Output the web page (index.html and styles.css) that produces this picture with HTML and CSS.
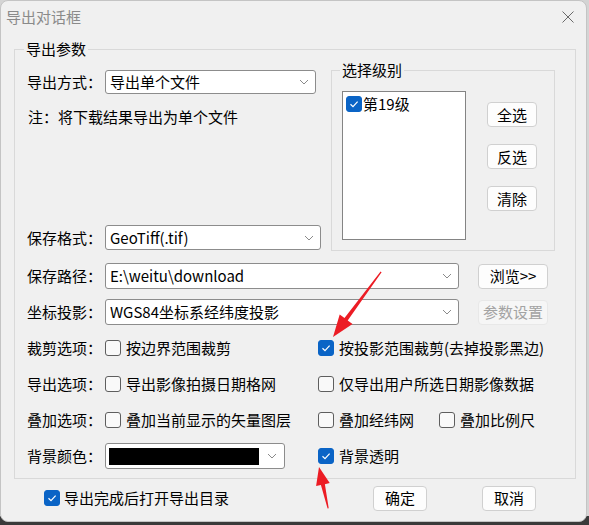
FILE: index.html
```html
<!DOCTYPE html>
<html lang="zh-CN">
<head>
<meta charset="utf-8">
<title>导出对话框</title>
<link rel="stylesheet" href="styles.css">
</head>
<body>
<div class="window">
  <div class="titlebar">
    <span class="title">导出对话框</span>
    <svg class="close" width="12" height="12" viewBox="0 0 12 12"><path d="M0.5 0.5L11.5 11.5M11.5 0.5L0.5 11.5" stroke="#6a6a6a" stroke-width="1" fill="none"/></svg>
  </div>
  <div class="content">
    <fieldset class="group main">
      <legend>导出参数</legend>
      <div class="top">
        <div class="left-col">
          <div class="row h24">
            <span class="lbl">导出方式：</span>
            <div class="combo w211"><span class="val">导出单个文件</span><svg class="chev" width="10" height="6" viewBox="0 0 10 6"><path d="M1 1L5 5L9 1" stroke="#8a8a8a" fill="none"/></svg></div>
          </div>
          <div class="note">注：将下载结果导出为单个文件</div>
          <div class="row h25 push">
            <span class="lbl">保存格式：</span>
            <div class="combo w216"><span class="val">GeoTiff(.tif)</span><svg class="chev" width="10" height="6" viewBox="0 0 10 6"><path d="M1 1L5 5L9 1" stroke="#8a8a8a" fill="none"/></svg></div>
          </div>
        </div>
        <fieldset class="group levels">
          <legend>选择级别</legend>
          <div class="levels-body">
            <div class="listbox">
              <div class="item"><span class="cb on"><svg width="14" height="14" viewBox="0 0 14 14"><path d="M3.5 7.2L6 9.6L10.6 4.6" stroke="#fff" stroke-width="1.2" fill="none"/></svg></span><span>第19级</span></div>
            </div>
            <div class="btn-col">
              <button class="btn">全选</button>
              <button class="btn">反选</button>
              <button class="btn">清除</button>
            </div>
          </div>
        </fieldset>
      </div>
      <div class="rows">
        <div class="row">
          <span class="lbl">保存路径：</span>
          <div class="combo w354"><span class="val">E:\weitu\download</span><svg class="chev" width="10" height="6" viewBox="0 0 10 6"><path d="M1 1L5 5L9 1" stroke="#8a8a8a" fill="none"/></svg></div>
          <button class="btn side">浏览&gt;&gt;</button>
        </div>
        <div class="row">
          <span class="lbl">坐标投影：</span>
          <div class="combo w354"><span class="val">WGS84坐标系经纬度投影</span><svg class="chev" width="10" height="6" viewBox="0 0 10 6"><path d="M1 1L5 5L9 1" stroke="#8a8a8a" fill="none"/></svg></div>
          <button class="btn side disabled">参数设置</button>
        </div>
        <div class="row">
          <span class="lbl">裁剪选项：</span>
          <label class="chk c213"><span class="cb"></span><span>按边界范围裁剪</span></label>
          <label class="chk"><span class="cb on"><svg width="14" height="14" viewBox="0 0 14 14"><path d="M3.5 7.2L6 9.6L10.6 4.6" stroke="#fff" stroke-width="1.2" fill="none"/></svg></span><span>按投影范围裁剪(去掉投影黑边)</span></label>
        </div>
        <div class="row">
          <span class="lbl">导出选项：</span>
          <label class="chk c213"><span class="cb"></span><span>导出影像拍摄日期格网</span></label>
          <label class="chk"><span class="cb"></span><span>仅导出用户所选日期影像数据</span></label>
        </div>
        <div class="row">
          <span class="lbl">叠加选项：</span>
          <label class="chk c213"><span class="cb"></span><span>叠加当前显示的矢量图层</span></label>
          <label class="chk c121"><span class="cb"></span><span>叠加经纬网</span></label>
          <label class="chk"><span class="cb"></span><span>叠加比例尺</span></label>
        </div>
        <div class="row">
          <span class="lbl">背景颜色：</span>
          <div class="combo w180 color"><span class="swatch"></span><svg class="chev" width="10" height="6" viewBox="0 0 10 6"><path d="M1 1L5 5L9 1" stroke="#8a8a8a" fill="none"/></svg></div>
          <label class="chk"><span class="cb on"><svg width="14" height="14" viewBox="0 0 14 14"><path d="M3.5 7.2L6 9.6L10.6 4.6" stroke="#fff" stroke-width="1.2" fill="none"/></svg></span><span>背景透明</span></label>
        </div>
      </div>
    </fieldset>
    <div class="footer">
      <label class="chk foot-chk"><span class="cb on"><svg width="14" height="14" viewBox="0 0 14 14"><path d="M3.5 7.2L6 9.6L10.6 4.6" stroke="#fff" stroke-width="1.2" fill="none"/></svg></span><span>导出完成后打开导出目录</span></label>
      <button class="btn foot-btn">确定</button>
      <button class="btn foot-btn cancel">取消</button>
    </div>
  </div>
  <svg class="arrows" width="589" height="525" viewBox="0 0 589 525">
    <polygon points="381.6,272.2 347.7,320.5 352.5,324.1 333,337 339.7,314.5 344.5,318.1 380.6,271.6" fill="#ec1c24"/>
    <polygon points="328.7,508.2 324.9,484.2 329.7,483.1 319,467 316.1,486.1 320.9,485 327.6,508.4" fill="#ec1c24"/>
  </svg>
</div>
</body>
</html>
```

FILE: styles.css
```css
* { box-sizing: border-box; }
html, body { margin: 0; padding: 0; }
body {
  width: 589px;
  height: 525px;
  overflow: hidden;
  background: linear-gradient(to bottom, #d4d4d4 0, #d4d4d4 516px, #3a3a3a 516px);
  font-family: "Noto Sans CJK SC", "Noto Sans", sans-serif;
  font-size: 15px;
  color: #000;
}
.window {
  position: relative;
  width: 587px;
  height: 522px;
  background: #f0f0f0;
  border: 1px solid #c4c4c4;
  border-radius: 8px;
  display: flex;
  flex-direction: column;
}
.titlebar {
  height: 31px;
  display: flex;
  align-items: center;
  justify-content: space-between;
  padding: 0 12px 0 5px;
}
.title { color: #8a8a8a; line-height: 20px; }
.close { display: block; }
.content { padding: 7px 0 0 13px; }

fieldset.group {
  margin: 0;
  min-width: 0;
  border: 1px solid #d9d9d9;
}
legend {
  padding: 0 2px;
  line-height: 20px;
  font-size: 15px;
}
.main {
  width: 562px;
  padding: 1px 20px 9px 12px;
}
.main > legend { margin-left: -3px; }
.levels {
  width: 224px;
  padding: 11px 17px 10px 10px;
}
.levels > legend { margin-left: -2px; }

.top { display: flex; }
.left-col {
  width: 304px;
  flex: none;
  display: flex;
  flex-direction: column;
  padding: 10px 0 1px;
}
.row {
  display: flex;
  align-items: center;
  height: 26px;
}
.row.h24 { height: 24px; }
.row.h25 { height: 25px; }
.push { margin-top: auto; }
.lbl {
  width: 78px;
  flex: none;
  line-height: 20px;
  white-space: nowrap;
}
.note {
  margin-top: 13px;
  line-height: 20px;
  padding-left: 1px;
}

.combo {
  height: 100%;
  flex: none;
  display: flex;
  align-items: center;
  padding-left: 4px;
  background: #fff;
  border: 1px solid #8c8c8c;
  border-radius: 3px;
}
.combo .val { flex: 1; line-height: 20px; white-space: nowrap; overflow: hidden; }
.chev { flex: none; margin-left: auto; margin-right: 6px; display: block; }
.w211 { width: 211px; }
.w216 { width: 216px; }
.w354 { width: 354px; }
.w180 { width: 180px; }
.color { padding-left: 3px; margin-right: 33px; }
.color .chev { margin-right: 7px; }
.swatch {
  width: 150px;
  height: 17px;
  background: #000;
}

.levels-body { display: flex; }
.listbox {
  width: 124px;
  height: 149px;
  flex: none;
  background: #fff;
  border: 1px solid #848484;
  padding: 4px 3px;
}
.item {
  display: flex;
  align-items: center;
  gap: 1px;
  line-height: 16px;
  height: 16px;
}
.btn-col {
  margin-left: 21px;
  padding-top: 11px;
  display: flex;
  flex-direction: column;
  gap: 17px;
}
.btn {
  width: 50px;
  height: 25px;
  padding: 0;
  font: inherit;
  line-height: 20px;
  color: #000;
  background: #fdfdfd;
  border: 1px solid #d0d0d0;
  border-radius: 4px;
  flex: none;
}
.btn.side { width: 70px; margin-left: 19px; }
.btn.disabled {
  background: #f6f6f6;
  border-color: #e8e8e8;
  color: #a3a3a3;
}

.rows {
  margin-top: 12px;
  display: flex;
  flex-direction: column;
  gap: 10px;
}
.chk {
  display: flex;
  align-items: center;
  gap: 5px;
  line-height: 20px;
  white-space: nowrap;
}
.c213 { width: 213px; flex: none; }
.c121 { width: 121px; flex: none; }
.cb {
  display: flex;
  align-items: center;
  justify-content: center;
  width: 16px;
  height: 16px;
  flex: none;
  border: 1px solid #5e5e5e;
  border-radius: 3px;
  background: #f9f9f9;
}
.cb.on {
  background: #0a64c6;
  border-color: #0a64c6;
}
.cb svg { display: block; }

.footer {
  margin-top: 6px;
  height: 26px;
  display: flex;
  align-items: center;
  padding-left: 30px;
}
.foot-chk { width: 329px; flex: none; gap: 4px; }
.foot-btn { width: 54px; }
.foot-btn.cancel { margin-left: 55px; }

.arrows {
  position: absolute;
  left: -1px;
  top: -1px;
  pointer-events: none;
}
```
